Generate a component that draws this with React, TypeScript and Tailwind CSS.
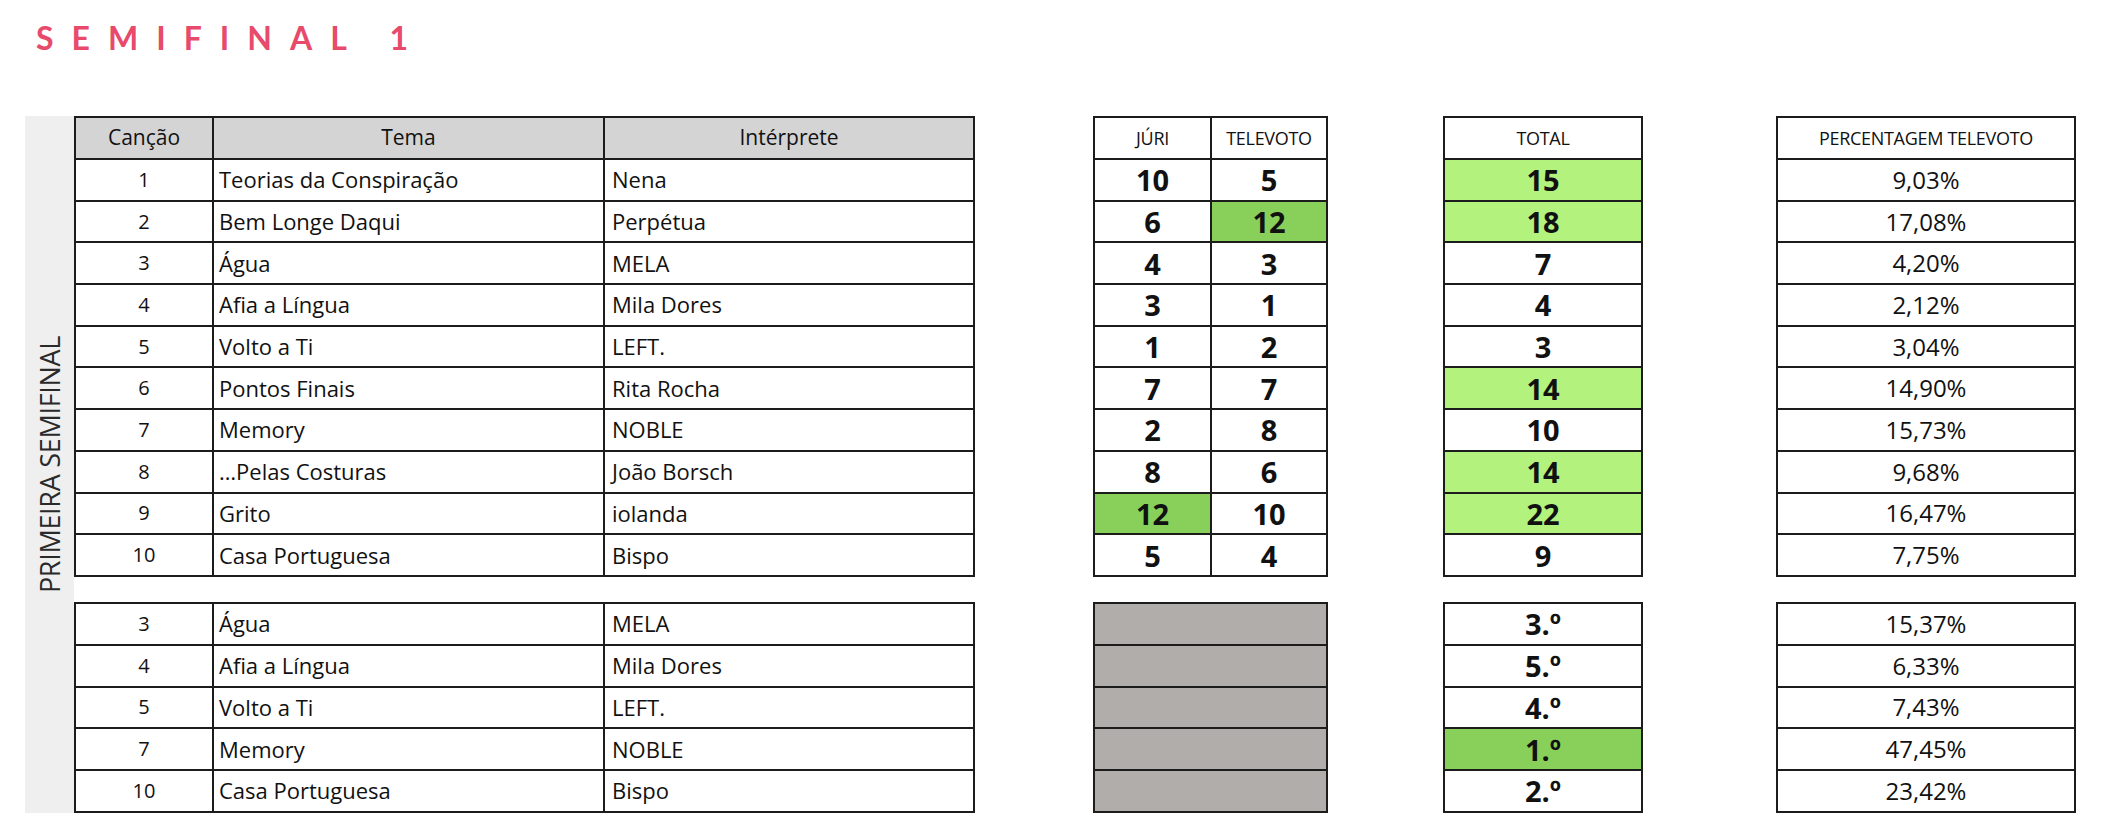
import React from 'react'

type Row = {
  n: number
  tema: string
  artist: string
  juri: number
  tele: number
  total: number
  pct: string
  hi?: 'juri' | 'tele'
  totalHi?: boolean
}

const rows: Row[] = [
  { n: 1, tema: 'Teorias da Conspiração', artist: 'Nena', juri: 10, tele: 5, total: 15, pct: '9,03%', totalHi: true },
  { n: 2, tema: 'Bem Longe Daqui', artist: 'Perpétua', juri: 6, tele: 12, total: 18, pct: '17,08%', hi: 'tele', totalHi: true },
  { n: 3, tema: 'Água', artist: 'MELA', juri: 4, tele: 3, total: 7, pct: '4,20%' },
  { n: 4, tema: 'Afia a Língua', artist: 'Mila Dores', juri: 3, tele: 1, total: 4, pct: '2,12%' },
  { n: 5, tema: 'Volto a Ti', artist: 'LEFT.', juri: 1, tele: 2, total: 3, pct: '3,04%' },
  { n: 6, tema: 'Pontos Finais', artist: 'Rita Rocha', juri: 7, tele: 7, total: 14, pct: '14,90%', totalHi: true },
  { n: 7, tema: 'Memory', artist: 'NOBLE', juri: 2, tele: 8, total: 10, pct: '15,73%' },
  { n: 8, tema: '…Pelas Costuras', artist: 'João Borsch', juri: 8, tele: 6, total: 14, pct: '9,68%', totalHi: true },
  { n: 9, tema: 'Grito', artist: 'iolanda', juri: 12, tele: 10, total: 22, pct: '16,47%', hi: 'juri', totalHi: true },
  { n: 10, tema: 'Casa Portuguesa', artist: 'Bispo', juri: 5, tele: 4, total: 9, pct: '7,75%' },
]

const finals = [
  { n: 3, tema: 'Água', artist: 'MELA', place: '3.º', pct: '15,37%' },
  { n: 4, tema: 'Afia a Língua', artist: 'Mila Dores', place: '5.º', pct: '6,33%' },
  { n: 5, tema: 'Volto a Ti', artist: 'LEFT.', place: '4.º', pct: '7,43%' },
  { n: 7, tema: 'Memory', artist: 'NOBLE', place: '1.º', pct: '47,45%', win: true },
  { n: 10, tema: 'Casa Portuguesa', artist: 'Bispo', place: '2.º', pct: '23,42%' },
]

// every row is 41.7px tall incl. its 2px top rule (border-box)
const row = 'flex h-[41.7px] border-t-2 border-[#1c1c1c] first:border-t-0 first:h-[40px]'
const box = 'border-2 border-[#1c1c1c] bg-white'
const numCell = 'flex items-center justify-center text-[29px] font-bold leading-none'

export default function App() {
  return (
    <div className="min-h-screen bg-white text-[#111] font-['Open_Sans',sans-serif]">
      <h1 className="pl-[36px] pt-[18px] h-[116px] font-['Lato',sans-serif] font-bold text-[32px] tracking-[18px] text-[#e84a6b] leading-[40px]">
        SEMIFINAL 1
      </h1>

      <div className="flex pl-[25px]">
        {/* side label */}
        <div className="w-[49px] h-[697px] bg-[#efefef] flex items-center justify-center">
          <span className="-rotate-90 whitespace-nowrap text-[27px] leading-none text-[#2a2a2a] tracking-[-0.3px]">
            PRIMEIRA SEMIFINAL
          </span>
        </div>

        {/* songs */}
        <div className="w-[901px]">
          <div className={box}>
            <div className={row + ' bg-[#d4d4d4] text-[21px]'}>
              <div className="w-[136px] flex items-center justify-center">Canção</div>
              <div className="w-[391px] flex items-center justify-center border-l-2 border-[#1c1c1c]">Tema</div>
              <div className="flex-1 flex items-center justify-center border-l-2 border-[#1c1c1c]">Intérprete</div>
            </div>
            {rows.map((r) => (
              <div key={r.n} className={row + ' text-[22px]'}>
                <div className="w-[136px] flex items-center justify-center text-[20px]">{r.n}</div>
                <div className="w-[391px] flex items-center pl-[5px] border-l-2 border-[#1c1c1c]">{r.tema}</div>
                <div className="flex-1 flex items-center pl-[7px] border-l-2 border-[#1c1c1c]">{r.artist}</div>
              </div>
            ))}
          </div>
          <div className={box + ' mt-[25px]'}>
            {finals.map((r) => (
              <div key={r.n} className={row + ' text-[22px]'}>
                <div className="w-[136px] flex items-center justify-center text-[20px]">{r.n}</div>
                <div className="w-[391px] flex items-center pl-[5px] border-l-2 border-[#1c1c1c]">{r.tema}</div>
                <div className="flex-1 flex items-center pl-[7px] border-l-2 border-[#1c1c1c]">{r.artist}</div>
              </div>
            ))}
          </div>
        </div>

        {/* jury / televote */}
        <div className="w-[235px] ml-[118px]">
          <div className={box}>
            <div className={row + ' text-[18px] tracking-[-0.3px]'}>
              <div className="w-[115px] flex items-center justify-center">JÚRI</div>
              <div className="flex-1 flex items-center justify-center border-l-2 border-[#1c1c1c]">TELEVOTO</div>
            </div>
            {rows.map((r) => (
              <div key={r.n} className={row}>
                <div className={numCell + ' w-[115px] ' + (r.hi === 'juri' ? 'bg-[#89d05a]' : '')}>{r.juri}</div>
                <div className={numCell + ' flex-1 border-l-2 border-[#1c1c1c] ' + (r.hi === 'tele' ? 'bg-[#89d05a]' : '')}>{r.tele}</div>
              </div>
            ))}
          </div>
          <div className={box + ' mt-[25px] bg-[#b0adab]'}>
            {finals.map((r) => (
              <div key={r.n} className={row + ' bg-[#b0adab]'} />
            ))}
          </div>
        </div>

        {/* total */}
        <div className="w-[200px] ml-[115px]">
          <div className={box}>
            <div className={row + ' items-center justify-center text-[18px] tracking-[-0.3px]'}>TOTAL</div>
            {rows.map((r) => (
              <div key={r.n} className={row + ' ' + numCell + (r.totalHi ? ' bg-[#b3f27d]' : '')}>{r.total}</div>
            ))}
          </div>
          <div className={box + ' mt-[25px]'}>
            {finals.map((r) => (
              <div key={r.n} className={row + ' ' + numCell + ' text-[25px]' + (r.win ? ' bg-[#89d05a]' : '')}>{r.place}</div>
            ))}
          </div>
        </div>

        {/* televote percentage */}
        <div className="w-[300px] ml-[133px]">
          <div className={box}>
            <div className={row + ' items-center justify-center text-[18px] tracking-[-0.3px]'}>PERCENTAGEM TELEVOTO</div>
            {rows.map((r) => (
              <div key={r.n} className={row + ' items-center justify-center text-[24px]'}>{r.pct}</div>
            ))}
          </div>
          <div className={box + ' mt-[25px]'}>
            {finals.map((r) => (
              <div key={r.n} className={row + ' items-center justify-center text-[24px]'}>{r.pct}</div>
            ))}
          </div>
        </div>
      </div>
    </div>
  )
}
